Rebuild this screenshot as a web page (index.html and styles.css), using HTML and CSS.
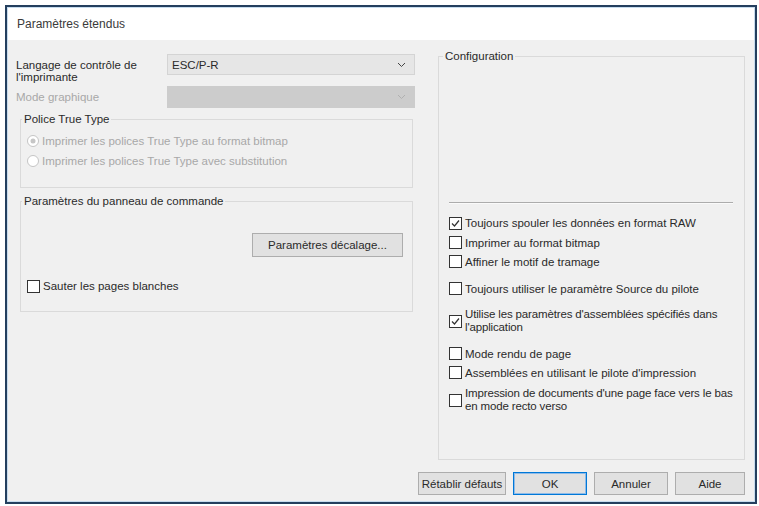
FILE: index.html
```html
<!DOCTYPE html>
<html lang="fr">
<head>
<meta charset="utf-8">
<title>Paramètres étendus</title>
<link rel="stylesheet" href="styles.css">
</head>
<body>
<div class="window">
  <div class="frame">
    <div class="titlebar">Paramètres étendus</div>
    <div class="content">
      <div class="main">
        <div class="left">
          <div class="row row-lang">
            <div class="label">Langage de contrôle de<br>l'imprimante</div>
            <div class="select">
              <span class="select-text">ESC/P-R</span>
              <svg class="chev" width="9" height="6" viewBox="0 0 9 6"><path d="M1 1 L4.5 4.5 L8 1" fill="none" stroke="#444" stroke-width="1"/></svg>
            </div>
          </div>
          <div class="row row-mode">
            <div class="label disabled">Mode graphique</div>
            <div class="select select-disabled">
              <span class="select-text"></span>
              <svg class="chev" width="9" height="6" viewBox="0 0 9 6"><path d="M1 1 L4.5 4.5 L8 1" fill="none" stroke="#b0b0b0" stroke-width="1"/></svg>
            </div>
          </div>
          <fieldset class="group group-tt">
            <legend>Police True Type</legend>
            <div class="opt disabled">
              <svg class="radio" width="12" height="12" viewBox="0 0 12 12"><circle cx="6" cy="6" r="5.5" fill="#fff" stroke="#c4c4c4"/><circle cx="6" cy="6" r="2.5" fill="#c6c6c6"/></svg>
              <span>Imprimer les polices True Type au format bitmap</span>
            </div>
            <div class="opt disabled">
              <svg class="radio" width="12" height="12" viewBox="0 0 12 12"><circle cx="6" cy="6" r="5.5" fill="#fff" stroke="#c4c4c4"/></svg>
              <span>Imprimer les polices True Type avec substitution</span>
            </div>
          </fieldset>
          <fieldset class="group group-panel">
            <legend>Paramètres du panneau de commande</legend>
            <div class="btn-line"><button class="btn btn-offset">Paramètres décalage...</button></div>
            <div class="opt check-left">
              <span class="cb"></span>
              <span>Sauter les pages blanches</span>
            </div>
          </fieldset>
        </div>
        <div class="right">
          <fieldset class="group config">
            <legend>Configuration</legend>
            <div class="config-blank"></div>
            <div class="sep"></div>
            <div class="checks">
              <div class="opt c1"><span class="cb"><svg width="11" height="11" viewBox="0 0 11 11"><path d="M2 5.5 L4.5 8 L9 2.5" fill="none" stroke="#333" stroke-width="1.2"/></svg></span><span>Toujours spouler les données en format RAW</span></div>
              <div class="opt c2"><span class="cb"></span><span>Imprimer au format bitmap</span></div>
              <div class="opt c3"><span class="cb"></span><span>Affiner le motif de tramage</span></div>
              <div class="opt c4"><span class="cb"></span><span>Toujours utiliser le paramètre Source du pilote</span></div>
              <div class="opt c5 two"><span class="cb"><svg width="11" height="11" viewBox="0 0 11 11"><path d="M2 5.5 L4.5 8 L9 2.5" fill="none" stroke="#333" stroke-width="1.2"/></svg></span><span>Utilise les paramètres d'assemblées spécifiés dans<br>l'application</span></div>
              <div class="opt c6"><span class="cb"></span><span>Mode rendu de page</span></div>
              <div class="opt c7"><span class="cb"></span><span>Assemblées en utilisant le pilote d'impression</span></div>
              <div class="opt c8 two"><span class="cb"></span><span>Impression de documents d'une page face vers le bas<br>en mode recto verso</span></div>
            </div>
          </fieldset>
        </div>
      </div>
      <div class="buttons">
        <button class="btn b-reset">Rétablir défauts</button>
        <button class="btn b-ok">OK</button>
        <button class="btn b-cancel">Annuler</button>
        <button class="btn b-help">Aide</button>
      </div>
    </div>
  </div>
</div>
</body>
</html>
```

FILE: styles.css
```css
html, body {
  margin: 0;
  padding: 0;
  background: #ffffff;
}
body {
  font-family: "Liberation Sans", Arial, sans-serif;
  font-size: 11.5px;
  color: #2a2a2a;
}
.window {
  margin: 5px 0 0 5px;
  width: 752px;
  height: 499px;
  box-sizing: border-box;
  border: 2px solid #243f5e;
}
.frame {
  height: 100%;
  box-sizing: border-box;
  border: 1px solid #c7dcee;
  display: flex;
  flex-direction: column;
  background: #f0f0f0;
}
.titlebar {
  height: 32px;
  line-height: 32px;
  background: #ffffff;
  padding-left: 9px;
  font-size: 12px;
  color: #3a3a3a;
}
.content {
  flex: 1;
  display: flex;
  flex-direction: column;
  padding: 0 9px 6px 8px;
}
.main {
  flex: 1;
  display: flex;
  gap: 23px;
}
.left {
  width: 399px;
  padding-top: 14px;
  display: flex;
  flex-direction: column;
}
.right {
  width: 307px;
  padding-top: 9px;
  display: flex;
  flex-direction: column;
}
.row {
  display: flex;
}
.row-lang {
  height: 32px;
  align-items: flex-start;
}
.row-lang .label {
  margin-top: 5px;
  line-height: 12px;
}
.row-mode {
  height: 22px;
  align-items: center;
}
.label {
  width: 151px;
  flex: none;
}
.disabled {
  color: #a8a8a8;
}
.select {
  width: 248px;
  height: 21px;
  box-sizing: border-box;
  border: 1px solid #d4d4d4;
  background: #e6e6e6;
  display: flex;
  align-items: center;
  justify-content: space-between;
  padding: 0 8px 0 4px;
}
.select-disabled {
  height: 22px;
  background: #cccccc;
  border-color: #cccccc;
}
.chev {
  display: block;
}
.group {
  margin: 0;
  border: 1px solid #dadada;
  min-width: 0;
}
.group legend {
  padding: 0 2px;
  line-height: 14px;
}
.group-tt {
  margin: 4px 2px 0 4px;
  padding: 5px 6px 16px 6px;
}
.group-tt legend,
.group-panel legend {
  margin-left: -5px;
}
.group-panel {
  margin: 6px 2px 0 4px;
  padding: 0 6px 15px 6px;
}
.opt {
  display: flex;
  align-items: center;
  min-height: 19px;
  white-space: nowrap;
}
.group-tt .opt {
  height: 20px;
}
.radio {
  flex: none;
  margin-right: 3px;
}
.cb {
  flex: none;
  width: 13px;
  height: 13px;
  box-sizing: border-box;
  border: 1px solid #333;
  background: #fff;
  margin-right: 3px;
  display: flex;
  align-items: center;
  justify-content: center;
}
.cb svg {
  display: block;
}
.btn-line {
  display: flex;
  justify-content: flex-end;
  margin-top: 25px;
  padding-right: 3px;
}
.btn {
  font-family: inherit;
  font-size: 11.5px;
  color: #2a2a2a;
  background: #e1e1e1;
  border: 1px solid #adadad;
  margin: 0;
  padding: 0;
  box-sizing: border-box;
}
.btn-offset {
  width: 151px;
  height: 24px;
}
.check-left {
  margin-top: 19px;
  height: 20px;
}
.config {
  flex: 1;
  padding: 0 11px 0 10px;
}
.config legend {
  margin-left: -6px;
}
.config-blank {
  height: 139px;
}
.sep {
  height: 0;
  border-top: 1px solid #acacac;
  border-bottom: 1px solid #fafafa;
}
.checks {
  display: flex;
  flex-direction: column;
  margin-top: 9px;
}
.c1 { height: 20px; }
.c4 { margin-top: 8px; }
.c5 { margin-top: 10px; }
.c6 { margin-top: 10px; }
.c8 { margin-top: 5px; }
.two {
  line-height: 13px;
  letter-spacing: -0.15px;
}
.buttons {
  margin-top: 12px;
  height: 23px;
  display: flex;
  justify-content: flex-end;
  gap: 7px;
}
.buttons .btn {
  height: 23px;
}
.b-reset { width: 88px; }
.b-ok {
  width: 74px;
  border-color: #0078d7;
  box-shadow: inset 0 0 0 1px #8fbbe8;
}
.b-cancel { width: 74px; }
.b-help { width: 70px; }
```
